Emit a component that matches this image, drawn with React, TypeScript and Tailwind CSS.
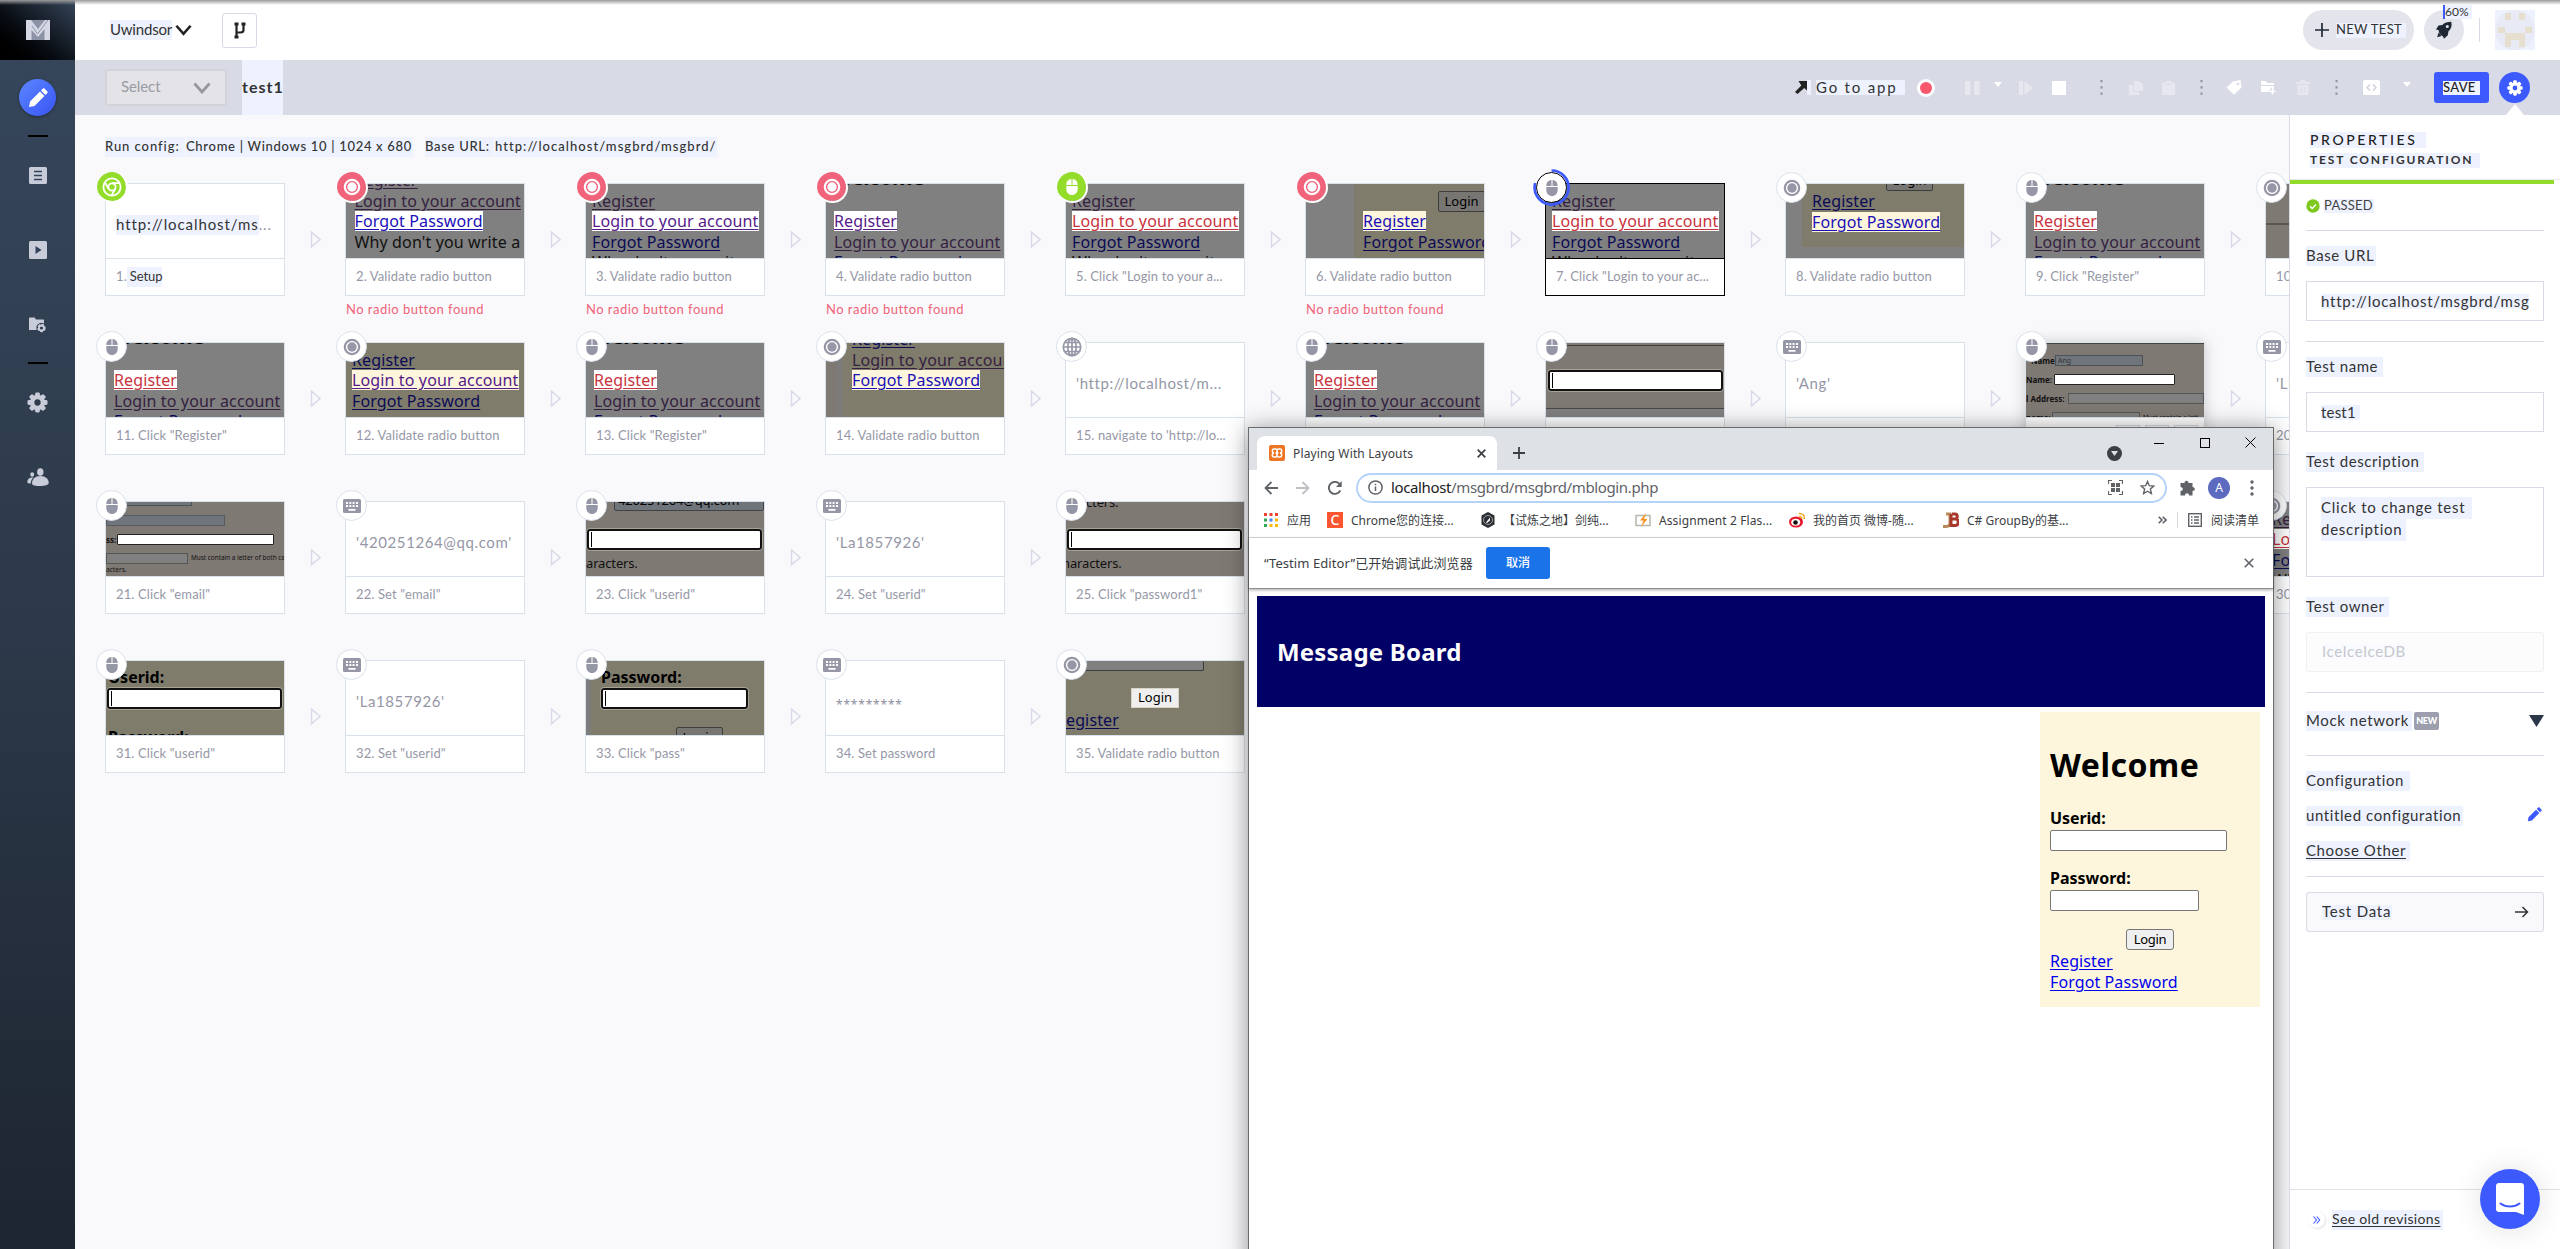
import type { ReactNode } from "react";

/* ---------- shared ---------- */

function Hl({ className = "", children }: { className?: string; children?: ReactNode }) {
  return <span className={"flex shrink-0 items-center whitespace-nowrap bg-[#eef2ff] " + className}>{children}</span>;
}

type Kind = "mouse" | "radio" | "keys" | "globe" | "chrome";

function Glyph({ kind, color }: { kind: Kind; color: string }) {
  if (kind === "mouse")
    return (
      <svg width="12" height="16" viewBox="0 0 12 16" fill={color}>
        <path d="M5.5 0C2.4.2.3 2.500.3 6h5.200zM6.500 0v6h5.200C11.700 2.500 9.600.2 6.500 0zM.3 7h11.400v3c0 3.400-2.400 6-5.700 6S.3 13.400.3 10z" />
      </svg>
    );
  if (kind === "radio")
    return (
      <svg width="18" height="18" viewBox="0 0 18 18" fill="none">
        <circle cx="9" cy="9" r="7.200" stroke={color} strokeWidth="2.200" />
        <circle cx="9" cy="9" r="4.700" fill={color} />
      </svg>
    );
  if (kind === "keys")
    return (
      <svg width="18" height="14" viewBox="0 0 18 14">
        <rect width="18" height="14" rx="1.500" fill={color} />
        <g fill="#fff">
          <path d="M3 3h2v2H3zM6.300 3h2v2h-2zM9.600 3h2v2h-2zM13 3h2v2h-2zM3 6h2v2H3zM6.300 6h2v2h-2zM9.600 6h2v2h-2zM13 6h2v2h-2zM5.500 10h7v1.700h-7z" />
        </g>
      </svg>
    );
  if (kind === "globe")
    return (
      <svg width="20" height="20" viewBox="0 0 20 20" fill="none" stroke={color} strokeWidth="1.700">
        <circle cx="10" cy="10" r="8.700" />
        <ellipse cx="10" cy="10" rx="4.200" ry="8.700" />
        <path d="M10 1v18M1.500 10h17M2.800 5.500h14.400M2.800 14.500h14.400" />
      </svg>
    );
  return (
    <svg width="20" height="20" viewBox="0 0 20 20" fill="none" stroke={color} strokeWidth="1.800">
      <circle cx="10" cy="10" r="8.600" />
      <circle cx="10" cy="10" r="3.600" />
      <path d="M10 6.200h7.500M6.700 12 3 5.500M13.200 12l-3.700 6.500" />
    </svg>
  );
}

/* ---------- thumbnails ---------- */

const PAGE = "#808080";
const CREAM = "#807c6c";
const TAUPE = "#7f7974";

type Line = { t: string; c: string; hl?: string };

function Lines({ x, y, lines }: { x: number; y: number; lines: Line[] }) {
  return (
    <div className="flex flex-col items-start" style={{ paddingLeft: x, marginTop: y }}>
      {lines.map((l, i) => (
        <div key={i} className="h-[20.5px] whitespace-nowrap font-['Noto_Sans'] text-[16px] leading-[20px] tracking-[0.13px]">
          <span className="inline-block h-[20px] underline underline-offset-2" style={{ color: l.c, background: l.hl, textDecoration: l.t.startsWith("Why") ? "none" : undefined }}>
            {l.t}
          </span>
        </div>
      ))}
    </div>
  );
}

const PURPLE = "#35203f";
const NAVY = "#0b0b55";
const RED = "#c8323c";
const VISITED = "#551a8b";
const BLUE = "#1a0fb8";

const REG: Line = { t: "Register", c: PURPLE };
const REGN: Line = { t: "Register", c: NAVY };
const LOG: Line = { t: "Login to your account", c: PURPLE };
const FOR: Line = { t: "Forgot Password", c: NAVY };
const WHY: Line = { t: "Why don't you write a", c: "#111" };

function Thumb({ bg, children }: { bg: string; children: ReactNode }) {
  return (
    <div className="relative flex h-[74px] w-[178px] flex-col overflow-hidden" style={{ background: bg }}>
      {children}
    </div>
  );
}

function Welcome() {
  return <div className="-mt-[19px] h-[24px] shrink-0 pl-1.5 font-['Noto_Sans'] text-[21px] leading-[24px] font-bold tracking-tight text-black">Welcome</div>;
}

function FocusInput({ x, w }: { x: number; w: number }) {
  return (
    <div className="h-[21px] shrink-0 rounded-[3px] border-2 border-[#111] bg-white pt-[1px] pl-[2px] outline outline-[#cfcabb]/50" style={{ marginLeft: x, width: w }}>
      <div className="h-[15px] w-px bg-black" />
    </div>
  );
}

function GreyButton({ className }: { className: string }) {
  return (
    <div className={"flex h-[21px] w-[47px] shrink-0 items-center justify-center rounded-[2px] border border-[#3c3c3c] bg-[#777672] font-['Noto_Sans'] text-[13px] text-black " + className}>
      Login
    </div>
  );
}

const thumbRegister = (
  <Thumb bg={PAGE}>
    <Welcome />
    <Lines x={8} y={22} lines={[{ t: "Register", c: RED, hl: "#fff" }, LOG, FOR]} />
  </Thumb>
);
const thumbLoginRed = (
  <Thumb bg={PAGE}>
    <Lines x={6} y={6.5} lines={[REG, { t: "Login to your account", c: RED, hl: "#fff" }, FOR, WHY]} />
  </Thumb>
);

/* ---------- steps ---------- */

type Step = {
  n: number;
  label: string;
  kind: Kind;
  tone?: "fail" | "pass";
  body: ReactNode;
  error?: boolean;
  active?: boolean;
  lifted?: boolean;
};

const txt = (s: string) => (
  <div className="flex h-[74px] items-center overflow-hidden pt-1.5 pl-2.5 text-[15px] tracking-[0.6px] whitespace-nowrap text-[#9597a6]">{s}</div>
);

const steps: Step[] = [
  {
    n: 1, label: "Setup", kind: "chrome", tone: "pass",
    body: (
      <div className="flex h-[74px] items-center pt-[7px] pl-2.5 text-[15px] tracking-[0.9px] text-[#333]">
        <Hl className="h-5">http://localhost/ms</Hl>
        <span className="text-[#9597a6]">...</span>
      </div>
    ),
  },
  { n: 2, label: "Validate radio button", kind: "radio", tone: "fail", error: true, body: <Thumb bg={PAGE}><Lines x={8.5} y={-14} lines={[REG, LOG, { t: "Forgot Password", c: BLUE, hl: "#fff" }, WHY]} /></Thumb> },
  { n: 3, label: "Validate radio button", kind: "radio", tone: "fail", error: true, body: <Thumb bg={PAGE}><Lines x={6} y={6.5} lines={[REG, { t: "Login to your account", c: VISITED, hl: "#fff" }, FOR, WHY]} /></Thumb> },
  { n: 4, label: "Validate radio button", kind: "radio", tone: "fail", error: true, body: <Thumb bg={PAGE}><Welcome /><Lines x={8} y={22} lines={[{ t: "Register", c: VISITED, hl: "#fff" }, LOG, FOR]} /></Thumb> },
  { n: 5, label: 'Click "Login to your a...', kind: "mouse", tone: "pass", body: thumbLoginRed },
  {
    n: 6, label: "Validate radio button", kind: "radio", tone: "fail", error: true,
    body: (
      <Thumb bg={PAGE}>
        <div className="ml-[48px] h-[74px] w-[130px] pt-[7px]" style={{ background: CREAM }}>
          <GreyButton className="ml-[84px]" />
          <Lines x={9} y={-1} lines={[{ t: "Register", c: BLUE, hl: "#fef6dc" }, FOR]} />
        </div>
      </Thumb>
    ),
  },
  { n: 7, label: 'Click "Login to your ac...', kind: "mouse", active: true, body: thumbLoginRed },
  {
    n: 8, label: "Validate radio button", kind: "radio",
    body: (
      <Thumb bg={PAGE}>
        <div className="ml-[16px] h-[63px] w-[162px]" style={{ background: CREAM }}>
          <GreyButton className="-mt-[14px] ml-[84px]" />
          <Lines x={10} y={0} lines={[REGN, { t: "Forgot Password", c: BLUE, hl: "#fef6dc" }]} />
        </div>
      </Thumb>
    ),
  },
  { n: 9, label: 'Click "Register"', kind: "mouse", body: thumbRegister },
  { n: 10, label: "Validate radio button", kind: "radio", body: <Thumb bg={TAUPE}><div className="mt-[39px] h-0.5 bg-[#5a5552]" /></Thumb> },
  { n: 11, label: 'Click "Register"', kind: "mouse", body: thumbRegister },
  { n: 12, label: "Validate radio button", kind: "radio", body: <Thumb bg={CREAM}><Lines x={6} y={6.5} lines={[REGN, { t: "Login to your account", c: VISITED, hl: "#fef6dc" }, FOR]} /></Thumb> },
  { n: 13, label: 'Click "Register"', kind: "mouse", body: thumbRegister },
  {
    n: 14, label: "Validate radio button", kind: "radio",
    body: (
      <Thumb bg={TAUPE}>
        <div className="ml-[11px] h-[74px] w-[167px] border-l-[5px] border-[#7c7c7c]" style={{ background: CREAM }}>
          <Lines x={10} y={-14} lines={[REGN, LOG, { t: "Forgot Password", c: BLUE, hl: "#fef6dc" }]} />
        </div>
      </Thumb>
    ),
  },
  { n: 15, label: "navigate to 'http://lo...", kind: "globe", body: txt("'http://localhost/m...") },
  { n: 16, label: 'Click "Register"', kind: "mouse", body: thumbRegister },
  {
    n: 17, label: 'Click "fname"', kind: "mouse",
    body: (
      <Thumb bg={TAUPE}>
        <div className="mt-[2px] h-px shrink-0 bg-[#3f3b39]" />
        <div className="h-[24px] shrink-0" />
        <FocusInput x={2} w={175} />
        <div className="mt-[17px] h-[9px] border-t border-[#4a4644] bg-[#808080]" />
      </Thumb>
    ),
  },
  { n: 18, label: 'Set "fname"', kind: "keys", body: txt("'Ang'") },
  {
    n: 19, label: "", kind: "mouse", lifted: true,
    body: (
      <Thumb bg={TAUPE}>
        <div className="flex flex-col gap-[8px] border-t border-[#444] pt-[11px] font-['Noto_Sans'] text-[8px] leading-[11px] font-bold text-[#111]">
          <div className="flex h-[11px] gap-[3px] pl-[5px]"><span className="w-[21px]">Name:</span><span className="w-[88px] border border-[#4d5258] bg-[#70757b] pl-0.5 text-[7px] leading-[9px] font-normal text-[#333]">Ang</span></div>
          <div className="flex h-[11px] gap-[3px]"><span className="w-[25px]">Name:</span><span className="w-[121px] rounded-[1px] border border-[#222] bg-white" /></div>
          <div className="flex h-[11px] gap-[3px]"><span className="w-[39px] whitespace-nowrap">l Address:</span><span className="w-[140px] border border-[#555] bg-[#808080]" /></div>
          <div className="flex h-[11px] gap-[3px]"><span className="w-[23px]">name:</span><span className="w-[88px] border border-[#555] bg-[#808080]" /><span className="text-[6.3px] font-normal whitespace-nowrap">Must contain a lett</span></div>
        </div>
      </Thumb>
    ),
  },
  { n: 20, label: 'Set "lname"', kind: "keys", body: txt("'Li'") },
  {
    n: 21, label: 'Click "email"', kind: "mouse",
    body: (
      <Thumb bg={TAUPE}>
        <div className="h-[4px] w-[86px] shrink-0 border-r border-b border-[#4d5258] bg-[#70757b]" />
        <div className="mt-[9px] h-[11px] w-[119px] shrink-0 border border-[#565b60] bg-[#70757b]" />
        <div className="mt-[8px] flex h-[11px] shrink-0 items-center gap-[2px] font-['Noto_Sans'] text-[8px] font-bold text-[#111]">
          <span className="w-[9px]">ss:</span><span className="h-[11px] w-[157px] rounded-[1px] border border-[#222] bg-white" />
        </div>
        <div className="mt-[7px] flex h-[12px] shrink-0 items-center gap-[3px] font-['Noto_Sans'] text-[6.4px] text-[#111]">
          <span className="h-[11px] w-[82px] shrink-0 border border-[#555] bg-[#808080]" /><span className="whitespace-nowrap">Must contain a letter of both ca</span>
        </div>
        <div className="h-[12px] shrink-0 font-['Noto_Sans'] text-[6.6px] leading-[11px] text-[#111]">acters.</div>
      </Thumb>
    ),
  },
  { n: 22, label: 'Set "email"', kind: "keys", body: txt("'420251264@qq.com'") },
  {
    n: 23, label: 'Click "userid"', kind: "mouse",
    body: (
      <Thumb bg={TAUPE}>
        <div className="-mt-[12px] flex h-[21px] shrink-0 gap-1.5 pl-[6px] font-['Noto_Sans'] text-[15px] leading-[19px]">
          <b className="w-[22px] text-right">or</b>
          <span className="w-[150px] shrink-0 rounded-[2px] border border-[#3e4246] bg-[#70757b] pl-[3px] text-[13px] tracking-[-0.2px]">420251264@qq.com</span>
        </div>
        <div className="h-[18px] shrink-0" />
        <FocusInput x={1} w={175} />
        <div className="mt-[3px] h-[20px] font-['Noto_Sans'] text-[13px] leading-[20px] tracking-[-0.15px] text-[#111]">aracters.</div>
      </Thumb>
    ),
  },
  { n: 24, label: 'Set "userid"', kind: "keys", body: txt("'La1857926'") },
  {
    n: 25, label: 'Click "password1"', kind: "mouse",
    body: (
      <Thumb bg={TAUPE}>
        <div className="-mt-[10px] h-[20px] shrink-0 pl-[20px] font-['Noto_Sans'] text-[13px] leading-[20px] tracking-[-0.15px] text-[#111]">cters.</div>
        <div className="h-[17px] shrink-0" />
        <FocusInput x={1} w={175} />
        <div className="mt-[3px] -ml-[4px] h-[20px] font-['Noto_Sans'] text-[13px] leading-[20px] tracking-[-0.15px] text-[#111]">haracters.</div>
      </Thumb>
    ),
  },
  { n: 26, label: 'Set "password1"', kind: "keys", body: txt("") },
  { n: 27, label: 'Click "password2"', kind: "mouse", body: txt("") },
  { n: 28, label: 'Set "password2"', kind: "keys", body: txt("") },
  { n: 29, label: 'Click "Submit"', kind: "mouse", body: txt("") },
  { n: 30, label: 'Click "Login to your ac...', kind: "radio", body: thumbLoginRed },
  {
    n: 31, label: 'Click "userid"', kind: "mouse",
    body: (
      <Thumb bg={CREAM}>
        <div className="mt-[6px] h-[21px] shrink-0 pl-[2px] font-['Noto_Sans'] text-[16px] leading-[20px] font-bold text-black">Userid:</div>
        <FocusInput x={1} w={175} />
        <div className="mt-[18px] pl-[2px] font-['Noto_Sans'] text-[16px] leading-[20px] font-bold text-black">Password:</div>
      </Thumb>
    ),
  },
  { n: 32, label: 'Set "userid"', kind: "keys", body: txt("'La1857926'") },
  {
    n: 33, label: 'Click "pass"', kind: "mouse",
    body: (
      <Thumb bg={CREAM}>
        <div className="flex h-[74px] flex-col border-l-[5px] border-[#7c7c7c] pl-[10px]">
          <div className="mt-[6px] h-[21px] shrink-0 font-['Noto_Sans'] text-[16px] leading-[20px] font-bold text-black">Password:</div>
          <FocusInput x={0} w={147} />
          <GreyButton className="mt-[18px] ml-[75px]" />
        </div>
      </Thumb>
    ),
  },
  { n: 34, label: "Set password", kind: "keys", body: <div className="flex h-[74px] items-center pt-[13px] pl-2.5 font-['Noto_Sans'] text-[12px] tracking-[0.8px] text-[#8d8f9f]">*********</div> },
  {
    n: 35, label: "Validate radio button", kind: "radio",
    body: (
      <Thumb bg={CREAM}>
        <div className="-ml-[10px] h-[10px] w-[148px] shrink-0 rounded-[2px] border border-t-0 border-[#3c3c3c] bg-[#808080]" />
        <div className="mt-[17px] ml-[65px] flex h-[20px] w-[48px] shrink-0 items-center justify-center border border-[#d8d3c2] bg-[#efefef] font-['Noto_Sans'] text-[13px] text-black">Login</div>
        <Lines x={0} y={2} lines={[{ t: "egister", c: NAVY }, { t: "orgot Password", c: NAVY }]} />
      </Thumb>
    ),
  },
];

function Badge({ step }: { step: Step }) {
  if (step.tone) {
    return (
      <div className={"absolute -top-[11px] -left-[8px] z-10 flex size-[31px] items-center justify-center rounded-full border-r-2 border-b-2 border-white bg-clip-padding " + (step.tone === "fail" ? "bg-[#f0637a]" : "bg-[#93dc2a]")}>
        <Glyph kind={step.kind} color="#fff" />
      </div>
    );
  }
  return (
    <div className={"absolute -top-[11px] -left-[9px] z-10 flex size-[31px] items-center justify-center rounded-full border bg-white " + (step.active ? "border-black" : "border-[#d9e2ea]")}>
      <Glyph kind={step.kind} color="#9597a6" />
      {step.active && (
        <svg className="absolute -top-[4px] -left-[4px]" width="37" height="37" viewBox="0 0 37 37" fill="none" stroke="#3d5aff" strokeWidth="2.700">
          <path d="M18.500 1.500A17 17 0 1 1 2.200 14" />
        </svg>
      )}
    </div>
  );
}

function StepCard({ step, last }: { step: Step; last: boolean }) {
  const line = step.active ? "border-black" : "border-[#d9e2ea]";
  return (
    <div className="relative flex h-[159px] w-[240px] items-start">
      <Badge step={step} />
      <div className="w-[180px] shrink-0">
        <div className={"h-[113px] border bg-white " + line + (step.lifted ? " shadow-[0_0_14px_rgba(0,0,0,0.18)]" : "")}>
          {step.body}
          <div className={"flex h-[37px] items-center border-t pl-2.5 text-[13px] tracking-[0.12px] whitespace-nowrap text-[#9597a6] " + line}>
            {step.lifted ? (
              <div className="flex gap-[5px] self-start pt-[7px] pl-[80px]">
                <i className="size-6 border border-[#d8dae5]" /><i className="size-6 border border-[#d8dae5]" /><i className="size-6 border border-[#d8dae5]" />
              </div>
            ) : step.n === 1 ? (
              <>1.<Hl className="h-5 pl-[3px] tracking-[-0.1px] text-[#333]">Setup</Hl></>
            ) : (
              step.n + ". " + step.label
            )}
          </div>
        </div>
        {step.error && <div className="mt-[3px] pl-px text-[13px] leading-5 tracking-[0.48px] text-[#f0637a]">No radio button found</div>}
      </div>
      {!last && (
        <svg className="mt-[48px] ml-[25px]" width="12" height="17" viewBox="0 0 12 17" fill="none" stroke="#d8dae8" strokeWidth="1.500">
          <path d="M1.500 1.200v14.600L10 8.500z" />
        </svg>
      )}
    </div>
  );
}

/* ---------- left rail ---------- */

function GearIcon({ size, color, hole }: { size: number; color: string; hole: string }) {
  return (
    <svg width={size} height={size} viewBox="0 0 22 22" fill={color}>
      {[0, 45, 90, 135].map((a) => (
        <rect key={a} x="8.500" y="0.500" width="5" height="21" rx="1.500" transform={`rotate(${a} 11 11)`} />
      ))}
      <circle cx="11" cy="11" r="8" />
      <circle cx="11" cy="11" r="3.300" fill={hole} />
    </svg>
  );
}

function Pencil({ size, color }: { size: number; color: string }) {
  return (
    <svg width={size} height={size} viewBox="0 0 20 20" fill={color}>
      <path d="M1 19l1-5.500L12 3.600 16.400 8 6.500 18zM13 2.600l1.800-1.800c.6-.6 1.300-.6 1.900 0l2.500 2.500c.6.6.6 1.300 0 1.900L17.400 7z" />
    </svg>
  );
}

function Rail() {
  return (
    <aside className="z-20 flex w-[75px] shrink-0 flex-col items-center bg-linear-to-b from-[#37475c] via-[#2c394a] to-[#1d2530]">
      <div className="flex h-[60px] w-full items-center justify-center bg-linear-to-tr from-black via-[#10161e] to-[#37475c]">
        <svg width="24" height="20" viewBox="0 0 24 20">
          <path d="M0 0h24v20H0z" fill="#8d93a6" />
          <path d="M0 0h5l7 9 7-9h5v20h-5.500V9L12 17 5.500 10v10H0z" fill="#d5d8e4" />
          <path d="M6 6l5.500 8L22 0" fill="none" stroke="#8d93a6" strokeWidth="1" />
        </svg>
      </div>
      <div className="mt-[19px] flex size-[37px] items-center justify-center rounded-full bg-linear-to-br from-[#5c86ff] to-[#3a52f5] shadow-[0_1px_3px_rgba(0,0,0,0.4)]">
        <Pencil size={20} color="#fff" />
      </div>
      <div className="mt-[19px] h-0.5 w-5 bg-black" />
      <svg className="mt-[30px]" width="18" height="17" viewBox="0 0 18 17">
        <rect width="18" height="17" rx="1.500" fill="#c8ccd8" />
        <path d="M5 4.500h8M5 8.500h8M5 12.500h8" stroke="#33425a" strokeWidth="1.500" />
      </svg>
      <svg className="mt-[57px]" width="18" height="18" viewBox="0 0 18 18">
        <rect width="18" height="18" rx="1.500" fill="#c8ccd8" />
        <path d="M6.500 5v8l6-4z" fill="#33425a" />
      </svg>
      <svg className="mt-[58px]" width="18" height="16" viewBox="0 0 18 16">
        <path d="M0 1.500C0 .7.500.5 1 .5h4.500L7 2.500h7c.8 0 1 .4 1 1V13H0z" fill="#c8ccd8" />
        <circle cx="12.500" cy="11" r="5.200" fill="#2f3d50" />
        <circle cx="12.500" cy="11" r="3" fill="none" stroke="#c8ccd8" strokeWidth="2.400" strokeDasharray="2.400 1" />
        <circle cx="12.500" cy="11" r="2.500" fill="none" stroke="#c8ccd8" strokeWidth="1.800" />
      </svg>
      <div className="mt-[29px] h-0.5 w-5 bg-black" />
      <div className="mt-[28px]"><GearIcon size={21} color="#c8ccd8" hole="#2e3b4d" /></div>
      <svg className="mt-[55px]" width="22" height="18" viewBox="0 0 22 18" fill="#c8ccd8">
        <ellipse cx="13.300" cy="4" rx="3.200" ry="3.800" />
        <path d="M5 15.500c0-4.500 3-7.500 8.300-7.500s8.400 3 8.400 7c0 2-4 3-8.400 3S5 17.500 5 15.500z" />
        <ellipse cx="5.200" cy="6.500" rx="1.900" ry="2.200" />
        <path d="M6.500 9.500C2.500 9 .3 11 .3 14c0 1.200 1.500 1.500 3.500 1.500 0-2.500.8-4.500 2.700-6z" />
      </svg>
    </aside>
  );
}

/* ---------- header and toolbar ---------- */

function Chevron({ w, color }: { w: number; color: string }) {
  return (
    <svg width={w} height="12" viewBox="0 0 18 12" fill="none" stroke={color} strokeWidth="2.800">
      <path d="M1.500 1.500L9 10l7.500-8.500" />
    </svg>
  );
}

function Header() {
  return (
    <header className="flex h-[60px] items-center bg-white pl-[35px]">
      <Hl className="h-5 w-[62px] pb-0.5 text-[15px] tracking-[-0.2px] text-[#333]">Uwindsor</Hl>
      <div className="ml-[3px]"><Chevron w={17} color="#222" /></div>
      <div className="ml-[30px] flex h-[35px] w-[35px] items-center justify-center rounded-[3px] border border-[#d8dae5]">
        <svg width="12" height="17" viewBox="0 0 12 17" fill="none" stroke="#222" strokeWidth="2.200">
          <path d="M2.500 2v13M2.500 10.500h4c2 0 3-.8 3-2.500V2" />
          <path d="M.5 2h4M7.500 2h4M.5 15h4" strokeWidth="3" />
        </svg>
      </div>
      <div className="ml-auto flex h-10 w-[111px] items-center rounded-full bg-[#e3e4ec] pl-3">
        <svg width="14" height="14" viewBox="0 0 14 14" stroke="#222b38" strokeWidth="1.700"><path d="M7 0v14M0 7h14" /></svg>
        <Hl className="ml-[7px] h-[15px] w-[70px] text-[13px] tracking-[0.3px] text-[#333]">NEW TEST</Hl>
      </div>
      <div className="relative ml-2.5 flex size-10 items-center justify-center rounded-full bg-[#e3e4ec]">
        <svg width="18" height="18" viewBox="0 0 18 18" fill="#1e2733">
          <path d="M16.300.8c-4 0-7 1-9 3.200L3.500 4.500 1 8.500l2.800.8c-.4 1.600 1 4.800 4.200 6.200l1 2.200 3.800-3.400.7-4C16 8 17.300 5 16.300.8z" />
          <path d="M3.500 11.500l-1.300 4.800L6.500 15z" />
          <circle cx="12.300" cy="5.500" r="1.500" fill="#e3e4ec" />
        </svg>
        <Hl className="absolute -top-[5px] left-[19px] h-[14px] w-[29px] border-l-2 border-[#3d5aff] text-[12px] tracking-[0.1px] text-[#333]">60%</Hl>
      </div>
      <div className="ml-[15px] h-6 w-px bg-[#d8dae5]" />
      <div className="mr-[25px] ml-[15px] size-10 bg-[#eef2ff]">
        <svg width="40" height="40" viewBox="0 0 40 40">
          <circle cx="20" cy="20" r="20" fill="#e8ebf5" />
          <path d="M10 3h6v7h-6zM24 3h6v7h-6zM3 17h7v6H3zM30 17h7v6h-7zM10 23h20v14h-6v-7h-8v7h-6z" fill="#e6dfcf" />
        </svg>
      </div>
    </header>
  );
}

function Dots() {
  return (
    <svg width="3" height="15" viewBox="0 0 3 15" fill="#8d90a3"><path d="M.5 0h2v2.200h-2zM.5 6.300h2v2.200h-2zM.5 12.600h2v2.200h-2z" /></svg>
  );
}

const Caret = () => <svg width="8" height="5" viewBox="0 0 8 5" fill="#fff"><path d="M0 0h8L4 5z" /></svg>;

function Toolbar() {
  return (
    <div className="relative flex h-[55px] items-center bg-[#d8dae5]">
      <div className="ml-[30px] flex h-[37px] w-[122px] items-center justify-between rounded-[3px] border-2 border-[#d3d3da] bg-[#e3e3e8] pr-[14px] pl-[14px] text-[#9a9ba3]">
        <span className="pb-0.5 text-[15px] tracking-[-0.1px]">Select</span>
        <Chevron w={18} color="#97989e" />
      </div>
      <Hl className="ml-[15px] h-full w-[41px] pb-0.5 text-[16px] font-bold tracking-[1px] text-[#333]">test1</Hl>

      <div className="ml-auto flex items-center">
        <svg width="12" height="13" viewBox="0 0 12 13" fill="#222"><path d="M3.500 0H12v9.500L9.300 7 2.500 13 0 11l6.300-6.500z" /></svg>
        <Hl className="h-[15px] w-[4px]" />
        <Hl className="ml-[5px] h-[15px] w-[89px] pb-px text-[15px] tracking-[1.8px] text-[#333]">Go to app</Hl>
      </div>
      <div className="ml-[12px] flex size-[18px] items-center justify-center rounded-full bg-white"><div className="size-3 rounded-full bg-[#f9576b]" /></div>
      <svg className="ml-[30px]" width="15" height="14" viewBox="0 0 15 14" fill="#e6e7ef"><rect width="5.500" height="14" rx="1" /><rect x="9" width="5.500" height="14" rx="1" /></svg>
      <div className="mb-[6px] ml-[14px]"><Caret /></div>
      <svg className="ml-[17px]" width="14" height="14" viewBox="0 0 14 14" fill="#e6e7ef"><path d="M0 0h4v14H0zM5.500 0L14 7l-8.500 7z" /></svg>
      <div className="ml-[19px] size-[14px] bg-white" />
      <div className="ml-[34px]"><Dots /></div>
      <svg className="ml-[26px]" width="14" height="14" viewBox="0 0 14 14" fill="#e6e7ef"><path d="M5 0h5l4 3.500V10H5z" /><path d="M0 4h4v7h6v3H0z" /></svg>
      <svg className="ml-[19px]" width="13" height="14" viewBox="0 0 13 14" fill="#e6e7ef"><path d="M0 1.500h4V0h5v1.500h4V14H0z" /><path d="M3.500 3.500h6" stroke="#d8dae5" /></svg>
      <div className="ml-[25px]"><Dots /></div>
      <svg className="ml-[23px]" width="16" height="15" viewBox="0 0 16 15" fill="#fff"><path d="M7 1.500L14.500 0l1 7.500-7.500 7.300L.5 7.500z" /><circle cx="12" cy="4" r="1.300" fill="#d8dae5" /></svg>
      <svg className="ml-[19px]" width="16" height="15" viewBox="0 0 16 15" fill="#fff"><path d="M0 1h5l1.500 2H13v2H0zM0 6h13v3.500h-2V7.700H9.500v2.800H8V12H0z" /><path d="M11.500 8.500v6M8.500 11.500h6" stroke="#fff" strokeWidth="1.600" /></svg>
      <svg className="ml-[19px]" width="14" height="15" viewBox="0 0 14 15" fill="#e6e7ef"><path d="M0 2h4.500V0h5v2H14v2H0zM1.500 5h11v10h-11z" /><path d="M5 7v6M9 7v6" stroke="#d8dae5" /></svg>
      <div className="ml-[25px]"><Dots /></div>
      <svg className="ml-[25px]" width="17" height="15" viewBox="0 0 17 15"><rect width="17" height="15" rx="1.500" fill="#fff" /><path d="M7 4.500L4 7.500l3 3M10 4.500l3 3-3 3" fill="none" stroke="#d0d2de" strokeWidth="1.500" /></svg>
      <div className="mb-[6px] ml-[23px]"><Caret /></div>
      <div className="ml-[23px] flex h-[31px] w-[55px] items-center justify-center rounded-[3px] bg-[#3d5aff]">
        <Hl className="h-[14px] w-[37px] text-[13px] font-medium tracking-[0.3px] text-[#222]">SAVE</Hl>
      </div>
      <div className="mr-[30px] ml-[10px] flex size-[31px] items-center justify-center rounded-full bg-[#3d5aff]"><GearIcon size={16} color="#fff" hole="#3d5aff" /></div>
      <svg className="absolute right-[36px] bottom-0" width="18" height="11" viewBox="0 0 18 11" fill="#fff"><path d="M0 11L9 0l9 11z" /></svg>
    </div>
  );
}

/* ---------- properties panel ---------- */

const label = "h-5 pb-0.5 text-[15px] tracking-[0.6px] text-[#333]";

function Properties() {
  return (
    <section className="absolute top-[115px] right-0 bottom-0 z-40 flex w-[271px] flex-col border-l border-[#d8dae5] bg-white">
      <div className="flex h-[65px] flex-col items-start border-b border-[#e6e7ee] pt-[17px] pl-5">
        <Hl className="h-4 w-[116px] pb-px text-[14px] font-medium tracking-[2.6px] text-[#222]">PROPERTIES</Hl>
        <Hl className="mt-[5px] h-[15px] w-[170px] pb-px text-[12px] font-bold tracking-[1.85px] text-[#333]">TEST CONFIGURATION</Hl>
      </div>
      <div className="h-1 w-[264px] bg-[#93dc2a]" />
      <div className="flex w-[254px] flex-col items-start pl-4">
        <div className="mt-[15px] flex h-[14px] items-center">
          <svg width="14" height="14" viewBox="0 0 14 14"><circle cx="7" cy="7" r="6.700" fill="#7fc81f" /><path d="M4 7.200l2.200 2.200L10 5.500" fill="none" stroke="#fff" strokeWidth="1.400" /></svg>
          <Hl className="ml-1 h-[14px] w-[50px] text-[13px] tracking-[0.25px] text-[#444]">PASSED</Hl>
        </div>
        <div className="mt-[17px] h-px w-full bg-[#d8dae5]" />
        <Hl className={label + " mt-[15px] w-[70px]"}>Base URL</Hl>
        <div className="mt-[15px] flex h-10 w-full items-center border border-[#d8dae5] pl-[14px]"><Hl className="h-[15px] w-[208px] text-[15px] tracking-[0.75px] text-[#333]">http://localhost/msgbrd/msg</Hl></div>
        <div className="mt-[20px] h-px w-full bg-[#d8dae5]" />
        <Hl className={label + " mt-[15px] w-[77px]"}>Test name</Hl>
        <div className="mt-[15px] flex h-10 w-full items-center border border-[#d8dae5] pl-[14px]"><Hl className="h-[15px] w-[39px] text-[15px] tracking-[0.2px] text-[#333]">test1</Hl></div>
        <Hl className={label + " mt-[20px] w-[118px]"}>Test description</Hl>
        <div className="mt-[15px] h-[90px] w-full border border-[#d8dae5] pt-[9px] pl-[14px] text-[15px] tracking-[0.75px] text-[#333]">
          <Hl className="h-[22px] w-[151px] pb-0.5">Click to change test</Hl>
          <Hl className="h-[22px] w-[85px] pb-0.5">description</Hl>
        </div>
        <Hl className={label + " mt-[20px] w-[83px]"}>Test owner</Hl>
        <div className="mt-[15px] flex h-10 w-full items-center rounded-[3px] border border-[#f0f0f3] bg-[#fcfcfd] pb-0.5 pl-[15px]"><span className="bg-[#fafbff] text-[15px] leading-[15px] tracking-[0.6px] text-[#c6c7cb]">IceIceIceDB</span></div>
        <div className="mt-[20px] h-px w-full bg-[#d8dae5]" />
        <div className="mt-[18px] flex h-5 w-full items-center">
          <Hl className={label + " w-[106px]"}>Mock network</Hl>
          <span className="ml-[2px] flex h-[18px] w-[25px] items-center justify-center rounded-[2px] bg-[#9d9fae] text-[9px] font-black tracking-[-0.3px] text-white">NEW</span>
          <svg className="ml-auto" width="15" height="12" viewBox="0 0 15 12" fill="#2b3748"><path d="M0 0h15L7.500 12z" /></svg>
        </div>
        <div className="mt-[24px] h-px w-full bg-[#d8dae5]" />
        <Hl className={label + " mt-[15px] w-[104px]"}>Configuration</Hl>
        <div className="mt-[15px] flex h-5 w-full items-center justify-between">
          <Hl className={label + " w-[157px]"}>untitled configuration</Hl>
          <div className="mr-[2px] mb-1"><Pencil size={15} color="#3d5aff" /></div>
        </div>
        <Hl className={label + " mt-[15px] w-[104px]"}><span className="underline underline-offset-2">Choose Other</span></Hl>
        <div className="mt-[15px] h-px w-full bg-[#d8dae5]" />
        <div className="mt-[15px] flex h-10 w-full items-center justify-between rounded-[3px] border border-[#d8dae5] bg-[#f9f9fc] pr-[14px] pl-[15px]">
          <Hl className="h-[15px] w-[70px] pb-px text-[15px] tracking-[0.8px] text-[#333]">Test Data</Hl>
          <svg width="14" height="12" viewBox="0 0 14 12" fill="none" stroke="#333" strokeWidth="1.500"><path d="M0 6h12.500M7.500 1l5 5-5 5" /></svg>
        </div>
      </div>
      <div className="mt-auto flex h-[60px] items-center border-t border-[#e0e1e8] pl-[18px]">
        <div className="flex size-[17px] items-center justify-end rounded-full bg-white pr-[4px] shadow-[1px_1px_2px_rgba(0,0,0,0.12)]">
          <svg width="8" height="8" viewBox="0 0 8 8" fill="none" stroke="#3d5aff" strokeWidth="1.100"><path d="M.5.5L3.500 4l-3 3.500M3.700.5L6.700 4l-3 3.500" /></svg>
        </div>
        <Hl className="ml-[7px] h-5 w-[111px] pb-0.5 text-[14px] tracking-[0.35px] text-[#333]"><span className="underline underline-offset-2">See old revisions</span></Hl>
      </div>
      <div className="absolute right-[20px] bottom-[20px] flex size-[60px] items-center justify-center rounded-full bg-[#3d5aff] shadow-[0_1px_30px_rgba(0,0,0,0.12)]">
        <svg width="28" height="32" viewBox="0 0 28 32">
          <path d="M3 0h22c1.800 0 3 1.200 3 3v29l-8-3H3c-1.800 0-3-1.200-3-3V3c0-1.800 1.200-3 3-3z" fill="#fff" />
          <path d="M4.500 20.500c5.500 4 13.500 4 19 0" fill="none" stroke="#3d5aff" strokeWidth="2" strokeLinecap="round" />
        </svg>
      </div>
    </section>
  );
}

/* ---------- floating browser window ---------- */

const cn = "font-['Noto_Sans','Noto_Sans_CJK_SC',sans-serif]";

function Bookmark({ icon, children, className = "" }: { icon: ReactNode; children: ReactNode; className?: string }) {
  return (
    <div className={"flex shrink-0 items-center gap-2 whitespace-nowrap " + className}>
      {icon}
      <span className="pt-px">{children}</span>
    </div>
  );
}

function Browser() {
  return (
    <div className={"absolute top-[427px] left-[1248px] z-30 flex h-[840px] w-[1026px] flex-col border border-[#6b6b6b] bg-white text-[12px] text-[#3c4043] shadow-[0_2px_22px_rgba(0,0,0,0.42)] " + cn}>
      <div className="flex h-[42px] items-end bg-[#dee1e6] pl-2">
        <div className="flex h-[34px] w-[240px] items-center rounded-t-lg bg-white pr-[11px] pl-[12px]">
          <svg width="16" height="16" viewBox="0 0 16 16"><rect width="16" height="16" rx="2" fill="#ee7524" /><path d="M5 4h1.500c1 0 1.500.7 1.500 1.700v.6C8 7.500 7.500 8 6.500 8 7.500 8 8 8.500 8 9.700v.6c0 1-.5 1.700-1.500 1.700H5c-1 0-1.700-.7-1.700-1.700C3.300 9 4 8 5 8 4 8 3.300 7 3.300 5.700 3.300 4.700 4 4 5 4zM11 4H9.500C8.500 4 8 4.700 8 5.700v.6C8 7.500 8.500 8 9.500 8 8.500 8 8 8.500 8 9.700v.6c0 1 .5 1.700 1.500 1.700H11c1 0 1.700-.7 1.700-1.700C12.700 9 12 8 11 8c1 0 1.700-1 1.700-2.300C12.700 4.700 12 4 11 4z" fill="none" stroke="#fff" strokeWidth="1.500" /></svg>
          <span className="ml-[8px] pt-[2px] tracking-[0.14px]">Playing With Layouts</span>
          <svg className="ml-auto" width="9" height="9" viewBox="0 0 9 9" stroke="#3c4043" strokeWidth="1.700"><path d="M.7.7l7.600 7.600M8.300.7L.7 8.300" /></svg>
        </div>
        <svg className="mb-[11px] ml-[16px]" width="12" height="12" viewBox="0 0 12 12" stroke="#3c4043" strokeWidth="1.800"><path d="M6 0v12M0 6h12" /></svg>
        <div className="mr-[32px] mb-[9px] ml-auto flex size-[15px] items-center justify-center rounded-full bg-[#3c4043]"><svg width="7" height="5" viewBox="0 0 7 5" fill="#dee1e6"><path d="M0 0h7L3.500 5z" /></svg></div>
        <svg className="mr-[36px] mb-[26px]" width="10" height="1" viewBox="0 0 10 1"><path d="M0 0h10v1H0z" fill="#000" /></svg>
        <div className="mr-[35px] mb-[22px] size-[10px] border border-black" />
        <svg className="mr-[17px] mb-[22px]" width="11" height="11" viewBox="0 0 11 11" stroke="#000"><path d="M.5.500l10 10M10.500.500l-10 10" /></svg>
      </div>

      <div className="flex h-[35px] shrink-0 items-center pl-[15px]">
        <svg width="14" height="14" viewBox="0 0 14 14" fill="none" stroke="#5f6368" strokeWidth="1.800"><path d="M14 7H1.500M7.500 1l-6 6 6 6" /></svg>
        <svg className="ml-[18px]" width="14" height="14" viewBox="0 0 14 14" fill="none" stroke="#bdc1c6" strokeWidth="1.800"><path d="M0 7h12.500M6.500 1l6 6-6 6" /></svg>
        <svg className="ml-[18px]" width="14" height="14" viewBox="0 0 14 14" fill="none" stroke="#5f6368" strokeWidth="1.900"><path d="M12.300 9.500A6 6 0 1 1 11.500 3" /><path d="M13.700 0v6H8z" fill="#5f6368" stroke="none" /></svg>
        <div className="ml-[14px] flex h-[30px] w-[811px] items-center rounded-full border-2 border-[#b5d3f8] pr-[10px] pl-[10px] text-[15px] tracking-[-0.37px]">
          <svg width="15" height="15" viewBox="0 0 15 15" fill="none" stroke="#5f6368" strokeWidth="1.500"><circle cx="7.500" cy="7.500" r="6.600" /><path d="M7.500 6.500V11M7.500 3.700v1.600" /></svg>
          <span className="ml-[8px] text-[#202124]">localhost</span>
          <span className="text-[#5f6368]">/msgbrd/msgbrd/mblogin.php</span>
          <svg className="ml-auto" width="15" height="15" viewBox="0 0 15 15" fill="#5f6368"><path d="M3 3h4v4H3zM8 3h4v4H8zM3 8h4v4H3zM8 8h4v4H8z" /><path d="M.5 4V.5H4M11 .5h3.500V4M14.500 11v3.500H11M4 14.500H.5V11" fill="none" stroke="#5f6368" strokeWidth="1.200" /></svg>
          <svg className="ml-[17px]" width="15" height="15" viewBox="0 0 15 15" fill="none" stroke="#5f6368" strokeWidth="1.400"><path d="M7.500 1.500l1.800 4.200 4.500.4-3.400 3 1 4.400-3.900-2.300-3.900 2.300 1-4.400-3.400-3 4.500-.4z" /></svg>
        </div>
        <svg className="ml-[13px]" width="16" height="16" viewBox="0 0 16 16" fill="#5f6368"><path d="M4.500 3c0-3 4-3 4 0H12.500v4c3 0 3 4 0 4v4.500H9c0-3-4-3-4 0H.5V11c3 0 3-4 0-4V3z" /></svg>
        <div className="ml-[12px] flex size-[22px] items-center justify-center rounded-full bg-[#5c6bc0] text-[12px] text-white">A</div>
        <svg className="ml-[20px]" width="4" height="16" viewBox="0 0 4 16" fill="#5f6368"><circle cx="2" cy="2" r="1.700" /><circle cx="2" cy="8" r="1.700" /><circle cx="2" cy="14" r="1.700" /></svg>
      </div>

      <div className="flex h-[33px] shrink-0 items-center border-b border-[#dadce0] pb-[2px] pl-[15px]">
        <Bookmark className="w-[63px] !gap-[9px]" icon={
          <svg width="14" height="14" viewBox="0 0 14 14"><path d="M0 0h3v3H0zM5.500 0h3v3h-3zM11 0h3v3h-3z" fill="#ea4335" /><path d="M0 5.500h3v3H0zM0 11h3v3H0z" fill="#34a853" /><path d="M5.500 5.500h3v3h-3z" fill="#4285f4" /><path d="M11 5.500h3v3h-3zM5.500 11h3v3h-3zM11 11h3v3h-3z" fill="#fbbc04" /></svg>
        }>应用</Bookmark>
        <Bookmark className="w-[153px]" icon={<span className="flex size-4 items-center justify-center bg-[#fc5531] text-[14px] leading-4 font-medium text-white">C</span>}>Chrome您的连接...</Bookmark>
        <Bookmark className="w-[155px] !gap-[7px]" icon={
          <svg width="16" height="16" viewBox="0 0 16 16"><path d="M8 0l6.500 3.500v9L8 16l-6.500-3.500v-9z" fill="#2b2f33" /><circle cx="8" cy="8" r="4.500" fill="none" stroke="#9aa0a6" /><path d="M6 10.500L10 5.500v3L7 11z" fill="#fff" /></svg>
        }>【试炼之地】剑纯...</Bookmark>
        <Bookmark className="w-[154px] tracking-[0.1px]" icon={
          <svg width="16" height="16" viewBox="0 0 16 16"><path d="M1 3.500h14v10H1z" fill="#fff" stroke="#b3b8ac" strokeWidth="1.500" /><path d="M11 1L5 8.500h3.500L6 15l6.500-8H9z" fill="#f7931e" /></svg>
        }>Assignment 2 Flas...</Bookmark>
        <Bookmark className="w-[154px]" icon={
          <svg width="16" height="16" viewBox="0 0 16 16"><ellipse cx="7" cy="10" rx="7" ry="5.500" fill="#e6162d" /><ellipse cx="6.700" cy="10.300" rx="4.500" ry="3.500" fill="#fff" /><circle cx="6.500" cy="10.500" r="2.300" fill="#111" /><path d="M10 4.500c2-.3 3 1 2.700 2.700M9.800 1.500C13.500 1 16 3.500 15.200 7.200" fill="none" stroke="#f5a623" strokeWidth="1.400" /></svg>
        }>我的首页 微博-随...</Bookmark>
        <Bookmark icon={
          <svg width="16" height="16" viewBox="0 0 16 16" fill="none" strokeWidth="3"><path d="M3 2h4v9c0 2.500-1.500 3.500-4.500 3.500H0" stroke="#b88a5a" /><path d="M9 2h3c3 0 3 5 0 5H8h5c3 0 3 6.500-.5 6.500H8V2" stroke="#a8382c" /></svg>
        }>C# GroupBy的基...</Bookmark>
        <svg className="ml-auto" width="9" height="8" viewBox="0 0 9 8" fill="none" stroke="#5f6368" strokeWidth="1.600"><path d="M.7.7L4 4 .7 7.300M4.700.7L8 4 4.700 7.300" /></svg>
        <div className="ml-[10px] h-4 w-px bg-[#dadce0]" />
        <Bookmark className="mr-[14px] ml-[10px] !gap-[9px]" icon={
          <svg width="14" height="14" viewBox="0 0 14 14" fill="none" stroke="#5f6368" strokeWidth="1.400"><rect x=".7" y=".7" width="12.600" height="12.600" /><path d="M3 4h1.500M6 4h5M3 7h1.500M6 7h5M3 10h1.500M6 10h5" /></svg>
        }>阅读清单</Bookmark>
      </div>

      <div className="flex h-[51px] shrink-0 items-center border-b border-[#8f8f8f] pr-[19px] pl-[15px] text-[13px] shadow-[0_1px_3px_rgba(0,0,0,0.35)]">
        <span className="w-[211px] pt-px tracking-[0.07px] whitespace-nowrap">“Testim Editor”已开始调试此浏览器</span>
        <span className="ml-[11px] flex h-[32px] w-[64px] items-center justify-center rounded-[3px] bg-[#1a73e8] text-[12px] font-medium text-white">取消</span>
        <svg className="ml-auto" width="10" height="10" viewBox="0 0 10 10" stroke="#5f6368" strokeWidth="1.600"><path d="M.7.7l8.600 8.600M9.300.7L.7 9.300" /></svg>
      </div>

      <div className="mx-2 mt-[7px] flex h-[111px] shrink-0 items-center bg-[#000066] pl-[20px] font-['Noto_Sans'] text-[24px] font-bold tracking-[0.2px] text-white">Message Board</div>
      <div className="mt-[5px] mr-[13px] flex h-[295px] w-[220px] flex-col self-end bg-[#fef6dc] pl-[10px] font-['Noto_Sans'] text-black">
        <h1 className="mt-[29px] h-[48px] text-[32px] leading-[48px] font-bold tracking-[0.5px]">Welcome</h1>
        <b className="mt-[18px] h-[23px] text-[16px] leading-[22px] tracking-[-0.1px]">Userid:</b>
        <div className="h-[21px] w-[177px] rounded-[2px] border border-[#767676] bg-white" />
        <b className="mt-[16px] h-[23px] text-[16px] leading-[22px]">Password:</b>
        <div className="h-[21px] w-[149px] rounded-[2px] border border-[#767676] bg-white" />
        <div className="mt-[18px] ml-[76px] flex h-[21px] w-[48px] items-center justify-center rounded-[3px] border border-[#767676] bg-[#efefef] text-[13px] tracking-[-0.3px]">Login</div>
        <span className="mt-px h-[21px] text-[16px] leading-[21px] tracking-[0.1px] text-[#0000ee] underline underline-offset-2">Register</span>
        <span className="h-[21px] text-[16px] leading-[21px] tracking-[0.1px] text-[#0000ee] underline underline-offset-2">Forgot Password</span>
      </div>
    </div>
  );
}

/* ---------- page ---------- */

export default function App() {
  return (
    <div className="relative flex h-[1249px] w-[2560px] overflow-hidden bg-[#f9f9fc] font-['Lato',sans-serif]">
      <Rail />
      <main className="flex min-w-0 flex-1 flex-col">
        <Header />
        <Toolbar />
        <div className="w-[2214px] flex-1 overflow-hidden pl-[30px]">
          <div className="mt-[22px] flex text-[13px] font-medium text-[#333]">
            <Hl className="h-5 w-[80px] tracking-[0.95px]">Run config:</Hl>
            <Hl className="ml-px h-5 w-[227px] tracking-[0.7px]">Chrome | Windows 10 | 1024 x 680</Hl>
            <Hl className="ml-[12px] h-5 w-[69px] tracking-[0.7px]">Base URL:</Hl>
            <Hl className="ml-px h-5 w-[222px] tracking-[1.05px]">http://localhost/msgbrd/msgbrd/</Hl>
          </div>
          <div className="mt-[26px] grid w-[2400px] grid-cols-[repeat(10,240px)]">
            {steps.map((s, i) => <StepCard key={s.n} step={s} last={i === steps.length - 1} />)}
          </div>
        </div>
      </main>
      <Browser />
      <Properties />
      <div className="absolute inset-x-0 top-0 z-50 h-[5px] bg-linear-to-b from-[#9a9a9a] to-transparent" />
    </div>
  );
}
